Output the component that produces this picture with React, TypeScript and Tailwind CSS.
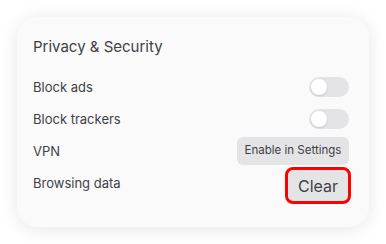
import React from "react";

function Toggle() {
  return (
    <div className="w-10 h-5 rounded-full bg-[#e4e4e7] p-[2px] flex items-center">
      <div className="w-4 h-4 rounded-full bg-white shadow-sm" />
    </div>
  );
}

export default function App() {
  return (
    <div className="w-[386px] h-[244px] bg-white pt-[17px] pl-[17px]" style={{ fontFamily: "Inter, 'Noto Sans', sans-serif" }}>
      <div className="w-[352px] h-[210px] rounded-[20px] bg-[#fafafa] shadow-[0_2px_18px_rgba(0,0,0,0.10)] pl-4 pr-5 pt-[18px]">
        <div className="h-6 flex items-center text-[15px] text-[#3f3f46]">Privacy &amp; Security</div>
        <div className="mt-[12px] flex flex-col text-[13px] text-[#3f3f46]">
          <div className="h-8 flex items-center justify-between">
            <span className="mt-[2px]">Block ads</span>
            <Toggle />
          </div>
          <div className="h-8 flex items-center justify-between">
            <span className="mt-[2px]">Block trackers</span>
            <Toggle />
          </div>
          <div className="h-8 flex items-center justify-between">
            <span className="mt-[2px]">VPN</span>
            <button className="h-7 w-[112px] rounded-md bg-[#e4e4e7] text-[11.5px] text-[#3f3f46]">Enable in Settings</button>
          </div>
          <div className="h-8 flex items-center justify-between">
            <span className="mt-[2px]">Browsing data</span>
            <button className="h-[37px] w-[66px] mt-[5px] -mr-[2px] rounded-lg border-[3px] border-[#ff0000] bg-[#e4e4e7] text-[16px] text-[#3f3f46]">Clear</button>
          </div>
        </div>
      </div>
    </div>
  );
}
